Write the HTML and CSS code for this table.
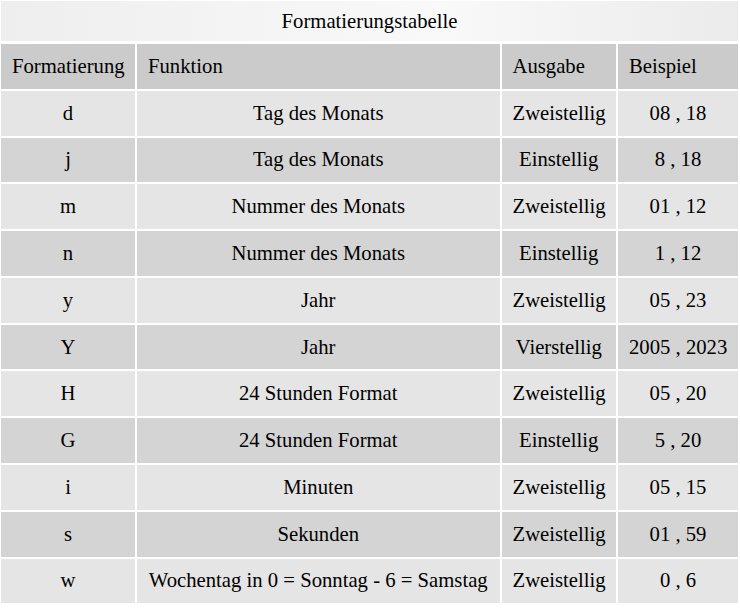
FILE: index.html
```html
<!DOCTYPE html>
<html lang="de">
<head>
<meta charset="utf-8">
<title>Formatierungstabelle</title>
<link rel="stylesheet" href="styles.css">
</head>
<body>
<div class="page">
  <div class="caption">Formatierungstabelle</div>
  <table class="grid">
    <colgroup>
      <col class="c1"><col class="c2"><col class="c3"><col class="c4">
    </colgroup>
    <thead>
      <tr><th>Formatierung</th><th>Funktion</th><th>Ausgabe</th><th>Beispiel</th></tr>
    </thead>
    <tbody>
      <tr><td>d</td><td>Tag des Monats</td><td>Zweistellig</td><td>08 , 18</td></tr>
      <tr><td>j</td><td>Tag des Monats</td><td>Einstellig</td><td>8 , 18</td></tr>
      <tr><td>m</td><td>Nummer des Monats</td><td>Zweistellig</td><td>01 , 12</td></tr>
      <tr><td>n</td><td>Nummer des Monats</td><td>Einstellig</td><td>1 , 12</td></tr>
      <tr><td>y</td><td>Jahr</td><td>Zweistellig</td><td>05 , 23</td></tr>
      <tr><td>Y</td><td>Jahr</td><td>Vierstellig</td><td>2005 , 2023</td></tr>
      <tr><td>H</td><td>24 Stunden Format</td><td>Zweistellig</td><td>05 , 20</td></tr>
      <tr><td>G</td><td>24 Stunden Format</td><td>Einstellig</td><td>5 , 20</td></tr>
      <tr><td>i</td><td>Minuten</td><td>Zweistellig</td><td>05 , 15</td></tr>
      <tr><td>s</td><td>Sekunden</td><td>Zweistellig</td><td>01 , 59</td></tr>
      <tr><td>w</td><td>Wochentag in 0 = Sonntag - 6 = Samstag</td><td>Zweistellig</td><td>0 , 6</td></tr>
    </tbody>
  </table>
</div>
</body>
</html>
```
FILE: styles.css
```css
html, body {
  margin: 0;
  padding: 0;
  background: #ffffff;
}

body {
  font-family: "Liberation Serif", "Times New Roman", serif;
  font-size: 20.7px;
  color: #000000;
}

.page {
  padding: 1px 0 0 1px;
}

.caption {
  width: 737px;
  height: 40px;
  line-height: 40px;
  text-align: center;
  background: linear-gradient(to right, #eeeeee 0%, #f9f9f9 60%, #ebebeb 100%);
}

.grid {
  margin: 1px 0 0 -2px;
  border-collapse: separate;
  border-spacing: 2px;
  table-layout: fixed;
  width: 741px;
}

.c1 { width: 134px; }
.c2 { width: 362.5px; }
.c3 { width: 114.5px; }
.c4 { width: 120px; }

.grid th,
.grid td {
  padding: 10.9px 11px;
  line-height: 23px;
  font-weight: normal;
  white-space: nowrap;
}

.grid th {
  text-align: left;
  background: #cbcbcb;
}

.grid td {
  text-align: center;
}

.grid tbody tr:nth-child(odd) td {
  background: #e5e5e5;
}

.grid tbody tr:nth-child(even) td {
  background: #d4d4d4;
}
```
